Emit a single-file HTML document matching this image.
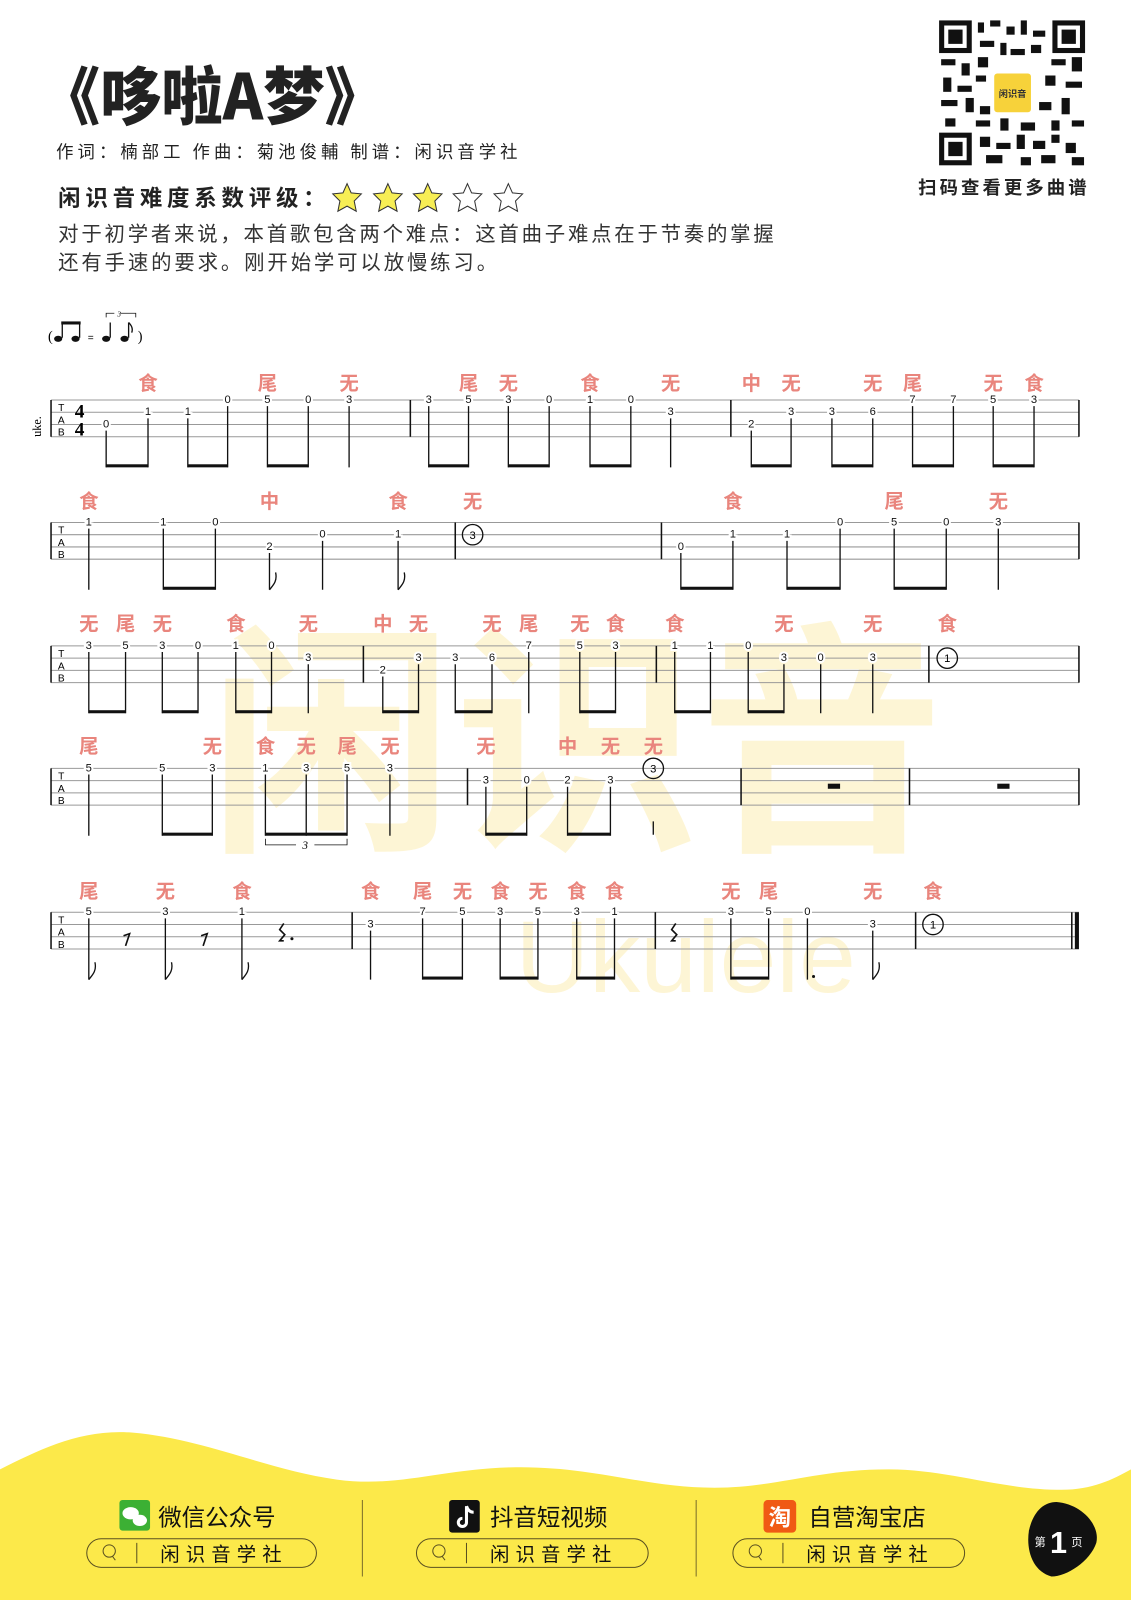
<!DOCTYPE html>
<html><head><meta charset="utf-8"><style>
html,body{margin:0;padding:0;background:#fff;}
svg{display:block}
.n{font:11px "Liberation Sans",sans-serif;text-anchor:middle;dominant-baseline:central;stroke:#fff;stroke-width:4;paint-order:stroke;fill:#111}
.l{font:bold 19px "Liberation Sans","Noto Sans CJK SC",sans-serif;fill:#e9857d;text-anchor:middle}
.st line,.st path{stroke:#999;stroke-width:1}
.s{stroke:#111;stroke-width:1.3;fill:none}
.b{fill:#111}
</style></head><body>
<svg width="1131" height="1600" viewBox="0 0 1108 1568" preserveAspectRatio="none" xmlns="http://www.w3.org/2000/svg">
<!-- watermark -->
<g fill="#fdf1c4" opacity="0.7">
<text x="205" y="815" style="font:bold 240px 'Noto Sans CJK SC',sans-serif">闲识音</text>
<text x="505" y="972" style="font:100px 'Liberation Sans',sans-serif">Ukulele</text>
</g>
<!-- header -->
<text x="38" y="117" textLength="340" lengthAdjust="spacingAndGlyphs" style="font:900 62px 'Noto Sans CJK SC',sans-serif;fill:#222">《哆啦A梦》</text>
<text x="55" y="155" textLength="452" lengthAdjust="spacing" style="font:17px 'Noto Sans CJK SC',sans-serif;fill:#222">作词：楠部工  作曲：菊池俊輔   制谱：闲识音学社</text>
<text x="57" y="202" textLength="262" lengthAdjust="spacing" style="font:bold 22px 'Noto Sans CJK SC',sans-serif;fill:#222">闲识音难度系数评级：</text>
<g stroke="#333" stroke-width="1">
<path fill="#f7ee55" d="M340 180l4 9 10 1-7 7 2 10-9-5-9 5 2-10-7-7 10-1z"/>
<path fill="#f7ee55" d="M380 180l4 9 10 1-7 7 2 10-9-5-9 5 2-10-7-7 10-1z"/>
<path fill="#f7ee55" d="M419 180l4 9 10 1-7 7 2 10-9-5-9 5 2-10-7-7 10-1z"/>
<path fill="#fff" d="M458 180l4 9 10 1-7 7 2 10-9-5-9 5 2-10-7-7 10-1z"/>
<path fill="#fff" d="M498 180l4 9 10 1-7 7 2 10-9-5-9 5 2-10-7-7 10-1z"/>
</g>
<text x="57" y="236" textLength="701" lengthAdjust="spacing" style="font:20px 'Noto Sans CJK SC',sans-serif;fill:#333">对于初学者来说，本首歌包含两个难点：这首曲子难点在于节奏的掌握</text>
<text x="57" y="264" textLength="430" lengthAdjust="spacing" style="font:20px 'Noto Sans CJK SC',sans-serif;fill:#333">还有手速的要求。刚开始学可以放慢练习。</text>
<!-- QR -->
<g>
<rect x="920" y="20" width="143" height="142" fill="#fff"/>
<g fill="#111">
<rect x="920" y="20" width="32" height="32"/><rect x="925" y="25" width="22" height="22" fill="#fff"/><rect x="929" y="29" width="14" height="14"/>
<rect x="1031" y="20" width="32" height="32"/><rect x="1036" y="25" width="22" height="22" fill="#fff"/><rect x="1040" y="29" width="14" height="14"/>
<rect x="920" y="130" width="32" height="32"/><rect x="925" y="135" width="22" height="22" fill="#fff"/><rect x="929" y="139" width="14" height="14"/>
</g>
<g fill="#111">
<rect x="958" y="22" width="6" height="10"/><rect x="970" y="20" width="10" height="6"/><rect x="986" y="26" width="8" height="8"/><rect x="1000" y="20" width="6" height="14"/><rect x="1012" y="30" width="12" height="6"/>
<rect x="960" y="40" width="14" height="6"/><rect x="980" y="42" width="6" height="12"/><rect x="1010" y="44" width="10" height="8"/><rect x="990" y="48" width="14" height="6"/>
<rect x="922" y="58" width="14" height="6"/><rect x="942" y="62" width="8" height="12"/><rect x="958" y="56" width="10" height="10"/><rect x="1030" y="58" width="14" height="6"/><rect x="1050" y="56" width="10" height="14"/>
<rect x="924" y="76" width="8" height="14"/><rect x="938" y="84" width="14" height="6"/><rect x="1024" y="74" width="10" height="10"/><rect x="1044" y="80" width="16" height="6"/><rect x="956" y="74" width="10" height="6"/>
<rect x="922" y="98" width="16" height="6"/><rect x="946" y="96" width="8" height="14"/><rect x="960" y="104" width="10" height="8"/><rect x="1018" y="100" width="12" height="8"/><rect x="1040" y="96" width="8" height="16"/>
<rect x="926" y="116" width="10" height="8"/><rect x="956" y="118" width="14" height="6"/><rect x="980" y="116" width="8" height="12"/><rect x="1000" y="120" width="14" height="8"/><rect x="1030" y="118" width="8" height="10"/><rect x="1050" y="118" width="12" height="6"/>
<rect x="960" y="134" width="10" height="10"/><rect x="976" y="140" width="14" height="6"/><rect x="996" y="132" width="8" height="14"/><rect x="1012" y="138" width="12" height="8"/><rect x="1030" y="132" width="8" height="8"/><rect x="1044" y="140" width="10" height="10"/><rect x="966" y="152" width="16" height="8"/><rect x="1000" y="154" width="10" height="8"/><rect x="1020" y="152" width="14" height="8"/><rect x="1050" y="154" width="12" height="8"/>
</g>
<rect x="974" y="72" width="36" height="38" rx="3" fill="#f7d23a"/>
<text x="992" y="95" style="font:bold 9px 'Noto Sans CJK SC',sans-serif;fill:#333;text-anchor:middle">闲识音</text>
</g>
<text x="982" y="190" textLength="165" lengthAdjust="spacing" style="font:bold 18px 'Noto Sans CJK SC',sans-serif;fill:#222;text-anchor:middle">扫码查看更多曲谱</text>
<!-- tempo -->
<g>
<text x="47" y="334" style="font:14px 'Liberation Serif',serif">(</text>
<ellipse cx="57" cy="332" rx="4" ry="3" class="b"/><ellipse cx="74" cy="332" rx="4" ry="3" class="b"/>
<path class="s" d="M61 331V316M78 331V316"/><rect x="60" y="315" width="19" height="3" class="b"/>
<text x="86" y="334" style="font:10px 'Liberation Sans',sans-serif">=</text>
<ellipse cx="104" cy="332" rx="4" ry="3" class="b"/><ellipse cx="122" cy="332" rx="4" ry="3" class="b"/>
<path class="s" d="M108 331V316M126 331V316M126 316q5 5 3 10"/>
<path class="s" style="stroke-width:0.8" d="M104 311V307H112M118 307H133V311"/>
<text x="115" y="310" style="font:italic 7px 'Liberation Serif',serif">3</text>
<text x="135" y="334" style="font:14px 'Liberation Serif',serif">)</text>
</g>
<text x="40" y="418" transform="rotate(-90 40 418)" style="font:12px 'Liberation Serif',serif;text-anchor:middle">uke.</text>

<!-- staffs -->
<g class="st">
<path d="M50 392H1057M50 404H1057M50 416H1057M50 428H1057"/>
<path d="M50 512H1057M50 524H1057M50 536H1057M50 548H1057"/>
<path d="M50 633H1057M50 645H1057M50 657H1057M50 669H1057"/>
<path d="M50 753H1057M50 765H1057M50 777H1057M50 789H1057"/>
<path d="M50 894H1057M50 906H1057M50 918H1057M50 930H1057"/>
</g>
<g class="s" style="stroke-width:1.5">
<path d="M50 392V428M402 392V428M716 392V428M1057 392V428"/>
<path d="M50 512V548M446 512V548M648 512V548M1057 512V548"/>
<path d="M50 633V669M356 633V669M643 633V669M910 633V669M1057 633V669"/>
<path d="M50 753V789M458 753V789M726 753V789M891 753V789M1057 753V789"/>
<path d="M50 894V930M345 894V930M642 894V930M897 894V930M1050 894V930"/>
</g>
<rect x="1053" y="894" width="4" height="36" class="b"/>
<g style="font:10px 'Liberation Sans',sans-serif" text-anchor="middle">
<text x="60" y="403">T</text><text x="60" y="415">A</text><text x="60" y="427">B</text>
<text x="60" y="523">T</text><text x="60" y="535">A</text><text x="60" y="547">B</text>
<text x="60" y="644">T</text><text x="60" y="656">A</text><text x="60" y="668">B</text>
<text x="60" y="764">T</text><text x="60" y="776">A</text><text x="60" y="788">B</text>
<text x="60" y="905">T</text><text x="60" y="917">A</text><text x="60" y="929">B</text>
</g>
<text x="78" y="409" style="font:bold 19px 'Liberation Serif',serif;text-anchor:middle">4</text>
<text x="78" y="427" style="font:bold 19px 'Liberation Serif',serif;text-anchor:middle">4</text>

<!-- ROW 1 -->
<g class="l"><text x="145" y="382">食</text><text x="262" y="382">尾</text><text x="342" y="382">无</text><text x="459" y="382">尾</text><text x="498" y="382">无</text><text x="578" y="382">食</text><text x="657" y="382">无</text><text x="736" y="382">中</text><text x="775" y="382">无</text><text x="855" y="382">无</text><text x="894" y="382">尾</text><text x="973" y="382">无</text><text x="1013" y="382">食</text></g>
<path class="s" d="M104 422V458M145 410V458M184 410V458M223 398V458M262 398V458M302 398V458M342 398V458M420 398V458M459 398V458M498 398V458M538 398V458M578 398V458M618 398V458M657 410V458M736 422V458M775 410V458M815 410V458M855 410V458M894 398V458M934 398V458M973 398V458M1013 398V458"/>
<g class="b"><rect x="104" y="455" width="41" height="3"/><rect x="184" y="455" width="39" height="3"/><rect x="262" y="455" width="40" height="3"/><rect x="420" y="455" width="39" height="3"/><rect x="498" y="455" width="40" height="3"/><rect x="578" y="455" width="40" height="3"/><rect x="736" y="455" width="39" height="3"/><rect x="815" y="455" width="40" height="3"/><rect x="894" y="455" width="40" height="3"/><rect x="973" y="455" width="40" height="3"/></g>
<g class="n"><text x="104" y="416">0</text><text x="145" y="404">1</text><text x="184" y="404">1</text><text x="223" y="392">0</text><text x="262" y="392">5</text><text x="302" y="392">0</text><text x="342" y="392">3</text><text x="420" y="392">3</text><text x="459" y="392">5</text><text x="498" y="392">3</text><text x="538" y="392">0</text><text x="578" y="392">1</text><text x="618" y="392">0</text><text x="657" y="404">3</text><text x="736" y="416">2</text><text x="775" y="404">3</text><text x="815" y="404">3</text><text x="855" y="404">6</text><text x="894" y="392">7</text><text x="934" y="392">7</text><text x="973" y="392">5</text><text x="1013" y="392">3</text></g>

<!-- ROW 2 -->
<g class="l"><text x="87" y="498">食</text><text x="264" y="498">中</text><text x="390" y="498">食</text><text x="463" y="498">无</text><text x="718" y="498">食</text><text x="876" y="498">尾</text><text x="978" y="498">无</text></g>
<path class="s" d="M87 518V578M160 518V578M211 518V578M264 542V578M316 530V578M390 530V578M667 542V578M718 530V578M771 530V578M823 518V578M876 518V578M927 518V578M978 518V578"/>
<path class="s" d="M264 578c3-4 8-8 6-17M390 578c3-4 8-8 6-17"/>
<g class="b"><rect x="160" y="575" width="51" height="3"/><rect x="667" y="575" width="51" height="3"/><rect x="771" y="575" width="52" height="3"/><rect x="876" y="575" width="51" height="3"/></g>
<g class="n"><text x="87" y="512">1</text><text x="160" y="512">1</text><text x="211" y="512">0</text><text x="264" y="536">2</text><text x="316" y="524">0</text><text x="390" y="524">1</text><text x="667" y="536">0</text><text x="718" y="524">1</text><text x="771" y="524">1</text><text x="823" y="512">0</text><text x="876" y="512">5</text><text x="927" y="512">0</text><text x="978" y="512">3</text></g>
<circle cx="463" cy="524" r="10" fill="#fff" class="s"/><text x="463" y="528" style="font:11px 'Liberation Sans',sans-serif;text-anchor:middle">3</text>

<!-- ROW 3 -->
<g class="l"><text x="87" y="618">无</text><text x="123" y="618">尾</text><text x="159" y="618">无</text><text x="231" y="618">食</text><text x="302" y="618">无</text><text x="375" y="618">中</text><text x="410" y="618">无</text><text x="482" y="618">无</text><text x="518" y="618">尾</text><text x="568" y="618">无</text><text x="603" y="618">食</text><text x="661" y="618">食</text><text x="768" y="618">无</text><text x="855" y="618">无</text><text x="928" y="618">食</text></g>
<path class="s" d="M87 639V699M123 639V699M159 639V699M194 639V699M231 639V699M266 639V699M302 651V699M375 663V699M410 651V699M446 651V699M482 651V699M518 639V699M568 639V699M603 639V699M661 639V699M696 639V699M733 639V699M768 651V699M804 651V699M855 651V699"/>
<g class="b"><rect x="87" y="696" width="36" height="3"/><rect x="159" y="696" width="35" height="3"/><rect x="231" y="696" width="35" height="3"/><rect x="375" y="696" width="35" height="3"/><rect x="446" y="696" width="36" height="3"/><rect x="568" y="696" width="35" height="3"/><rect x="661" y="696" width="35" height="3"/><rect x="733" y="696" width="35" height="3"/></g>
<g class="n"><text x="87" y="633">3</text><text x="123" y="633">5</text><text x="159" y="633">3</text><text x="194" y="633">0</text><text x="231" y="633">1</text><text x="266" y="633">0</text><text x="302" y="645">3</text><text x="375" y="657">2</text><text x="410" y="645">3</text><text x="446" y="645">3</text><text x="482" y="645">6</text><text x="518" y="633">7</text><text x="568" y="633">5</text><text x="603" y="633">3</text><text x="661" y="633">1</text><text x="696" y="633">1</text><text x="733" y="633">0</text><text x="768" y="645">3</text><text x="804" y="645">0</text><text x="855" y="645">3</text></g>
<circle cx="928" cy="645" r="10" fill="#fff" class="s"/><text x="928" y="649" style="font:11px 'Liberation Sans',sans-serif;text-anchor:middle">1</text>

<!-- ROW 4 -->
<g class="l"><text x="87" y="738">尾</text><text x="208" y="738">无</text><text x="260" y="738">食</text><text x="300" y="738">无</text><text x="340" y="738">尾</text><text x="382" y="738">无</text><text x="476" y="738">无</text><text x="556" y="738">中</text><text x="598" y="738">无</text><text x="640" y="738">无</text></g>
<path class="s" d="M87 759V819M159 759V819M208 759V819M260 759V819M300 759V819M340 759V819M382 759V819M476 771V819M516 771V819M556 771V819M598 771V819M640 805V818"/>
<g class="b"><rect x="159" y="816" width="49" height="3"/><rect x="260" y="816" width="80" height="3"/><rect x="476" y="816" width="40" height="3"/><rect x="556" y="816" width="42" height="3"/><rect x="811" y="768" width="12" height="5"/><rect x="977" y="768" width="12" height="5"/></g>
<path class="s" style="stroke-width:0.8" d="M260 822V828H290M308 828H340V822"/>
<text x="299" y="832" style="font:italic 11px 'Liberation Serif',serif;text-anchor:middle">3</text>
<g class="n"><text x="87" y="753">5</text><text x="159" y="753">5</text><text x="208" y="753">3</text><text x="260" y="753">1</text><text x="300" y="753">3</text><text x="340" y="753">5</text><text x="382" y="753">3</text><text x="476" y="765">3</text><text x="516" y="765">0</text><text x="556" y="765">2</text><text x="598" y="765">3</text></g>
<circle cx="640" cy="753" r="10" fill="#fff" class="s"/><text x="640" y="757" style="font:11px 'Liberation Sans',sans-serif;text-anchor:middle">3</text>

<!-- ROW 5 -->
<g class="l"><text x="87" y="880">尾</text><text x="162" y="880">无</text><text x="237" y="880">食</text><text x="363" y="880">食</text><text x="414" y="880">尾</text><text x="453" y="880">无</text><text x="490" y="880">食</text><text x="527" y="880">无</text><text x="565" y="880">食</text><text x="602" y="880">食</text><text x="716" y="880">无</text><text x="753" y="880">尾</text><text x="855" y="880">无</text><text x="914" y="880">食</text></g>
<path class="s" d="M87 900V960M162 900V960M237 900V960M363 912V960M414 900V960M453 900V960M490 900V960M527 900V960M565 900V960M602 900V960M716 900V960M753 900V960M791 900V960M855 912V960"/>
<path class="s" d="M87 960c3-4 8-8 6-17M162 960c3-4 8-8 6-17M237 960c3-4 8-8 6-17M855 960c3-4 8-8 6-17"/>
<path class="s" style="stroke-width:1.6" d="M121 917l6-2-4 12M197 917l6-2-4 12M278 905l-4 6 5 5-5 6 4 0M662 905l-4 6 5 5-5 6 4 0"/>
<circle cx="286" cy="920" r="1.5" class="b"/><circle cx="797" cy="957" r="1.5" class="b"/>
<g class="b"><rect x="414" y="957" width="39" height="3"/><rect x="490" y="957" width="37" height="3"/><rect x="565" y="957" width="37" height="3"/><rect x="716" y="957" width="37" height="3"/></g>
<g class="n"><text x="87" y="894">5</text><text x="162" y="894">3</text><text x="237" y="894">1</text><text x="363" y="906">3</text><text x="414" y="894">7</text><text x="453" y="894">5</text><text x="490" y="894">3</text><text x="527" y="894">5</text><text x="565" y="894">3</text><text x="602" y="894">1</text><text x="716" y="894">3</text><text x="753" y="894">5</text><text x="791" y="894">0</text><text x="855" y="906">3</text></g>
<circle cx="914" cy="906" r="10" fill="#fff" class="s"/><text x="914" y="910" style="font:11px 'Liberation Sans',sans-serif;text-anchor:middle">1</text>

<!-- footer -->
<path fill="#fce94a" d="M0 1440C40 1420 80 1400 130 1404C200 1410 260 1440 330 1450C390 1458 430 1440 500 1438C580 1436 630 1458 700 1458C760 1458 800 1440 870 1440C930 1440 980 1460 1040 1460C1070 1460 1090 1450 1108 1440V1568H0Z"/>
<path stroke="#7a6e2a" stroke-width="1" d="M355 1470V1545M682 1470V1545"/>
<rect x="117" y="1470" width="30" height="30" rx="3" fill="#3cb034"/>
<ellipse cx="128" cy="1483" rx="8" ry="6" fill="#fff"/><ellipse cx="137" cy="1490" rx="7" ry="5.5" fill="#fff"/>
<text x="155" y="1495" style="font:23px 'Noto Sans CJK SC',sans-serif;fill:#111">微信公众号</text>
<rect x="440" y="1470" width="30" height="32" rx="3" fill="#111"/>
<path d="M457 1476v16a4 4 0 1 1-4-4M457 1476q2 6 7 6" stroke="#fff" stroke-width="3" fill="none"/>
<text x="480" y="1495" style="font:23px 'Noto Sans CJK SC',sans-serif;fill:#111">抖音短视频</text>
<rect x="748" y="1470" width="32" height="32" rx="4" fill="#f05a14"/>
<text x="764" y="1495" style="font:bold 22px 'Noto Sans CJK SC',sans-serif;fill:#fff;text-anchor:middle">淘</text>
<text x="792" y="1495" style="font:23px 'Noto Sans CJK SC',sans-serif;fill:#111">自营淘宝店</text>
<g fill="none" stroke="#5a5020" stroke-width="1">
<rect x="85" y="1508" width="225" height="28" rx="14"/><rect x="408" y="1508" width="227" height="28" rx="14"/><rect x="718" y="1508" width="227" height="28" rx="14"/>
<circle cx="107" cy="1520" r="6"/><path d="M110 1525l3 4M134 1512V1532"/>
<circle cx="430" cy="1520" r="6"/><path d="M433 1525l3 4M457 1512V1532"/>
<circle cx="740" cy="1520" r="6"/><path d="M743 1525l3 4M767 1512V1532"/>
</g>
<g style="font:19px 'Noto Sans CJK SC',sans-serif;fill:#111;letter-spacing:6px">
<text x="157" y="1530">闲识音学社</text><text x="480" y="1530">闲识音学社</text><text x="790" y="1530">闲识音学社</text></g>
<path fill="#111" d="M1035 1472C1060 1474 1078 1495 1074 1512C1068 1530 1045 1545 1030 1545C1012 1540 1005 1520 1008 1500C1012 1482 1022 1472 1035 1472Z"/>
<text x="1019" y="1515" style="font:11px 'Noto Sans CJK SC',sans-serif;fill:#fff;text-anchor:middle">第</text>
<text x="1037" y="1522" style="font:bold 30px 'Liberation Sans',sans-serif;fill:#fff;text-anchor:middle">1</text>
<text x="1055" y="1515" style="font:11px 'Noto Sans CJK SC',sans-serif;fill:#fff;text-anchor:middle">页</text>
</svg>
</body></html>
